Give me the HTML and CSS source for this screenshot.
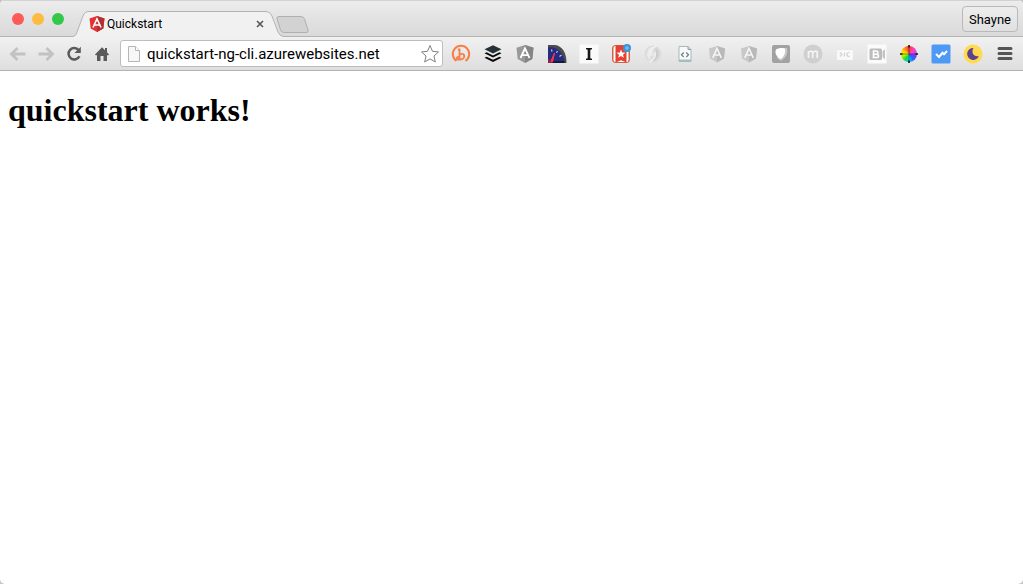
FILE: index.html
```html
<!DOCTYPE html>
<html lang="en">
<head>
  <meta charset="UTF-8">
  <meta name="viewport" content="width=device-width, initial-scale=1.0">
  <title>Quickstart</title>
  <link rel="stylesheet" href="styles.css">
</head>
<body>
  <div class="window">

    <!-- Tab strip -->
    <header class="tab-strip">
      <div class="lights">
        <button class="light close" aria-label="Close window"></button>
        <button class="light minimize" aria-label="Minimize window"></button>
        <button class="light maximize" aria-label="Maximize window"></button>
      </div>
      <div class="tab">
        <svg class="tab-shape" viewBox="0 0 212 26" preserveAspectRatio="none" aria-hidden="true">
          <path d="M0 25.5 C3 25.5 4 24 5 21 L11 5 Q12.500 .5 17 .5 H193 Q198 .5 200 5 L206 21 Q208 25.500 212 25.500 V26 H0Z" fill="#f1f1f1"/>
          <path d="M0 25.500 C3 25.500 4 24 5 21 L11 5 Q12.500 .5 17 .5 H193 Q198 .5 200 5 L206 21 Q208 25.500 212 25.500" fill="none" stroke="#b3b3b3"/>
        </svg>
        <svg class="favicon" viewBox="0 0 16 16" aria-hidden="true">
          <path d="M8 0 L15.500 2.600 L14.300 12.400 L8 16 L1.700 12.400 L.5 2.600Z" fill="#e23237"/>
          <path d="M8 0 L15.500 2.600 L14.300 12.400 L8 16Z" fill="#b52e31"/>
          <path d="M4 11.500 L8 2.800 L12 11.500 M5.500 9 H10.500" fill="none" stroke="#fff" stroke-width="1.600"/>
        </svg>
        <span class="tab-title">Quickstart</span>
        <button class="tab-close" aria-label="Close tab">
          <svg viewBox="0 0 8 8"><path d="M1 1 L7 7 M7 1 L1 7" stroke="#555" stroke-width="1.600"/></svg>
        </button>
      </div>
      <button class="new-tab" aria-label="New tab">
        <svg viewBox="0 0 33 18"><path d="M3 .5 H25 Q27.500 .5 28.500 3 L32 14 Q33 16.500 30 16.500 H8 Q5.500 16.500 4.500 14 L1 3 Q0 .5 3 .5Z" fill="#d2d2d2" stroke="#b0b0b0"/></svg>
      </button>
      <button class="profile">Shayne</button>
    </header>

    <!-- Toolbar -->
    <nav class="toolbar">
      <div class="nav-buttons">
        <button class="nav-button" aria-label="Back">
          <svg viewBox="0 0 18 18"><path d="M8.500 3 L2.500 9 L8.500 15 M3 9 H16.500" fill="none" stroke="#c2c2c2" stroke-width="2.800"/></svg>
        </button>
        <button class="nav-button" aria-label="Forward">
          <svg viewBox="0 0 18 18"><path d="M9.500 3 L15.500 9 L9.500 15 M15 9 H1.500" fill="none" stroke="#c2c2c2" stroke-width="2.800"/></svg>
        </button>
        <button class="nav-button" aria-label="Reload">
          <svg viewBox="0 0 18 18"><path d="M13.700 5.200 A5.700 5.700 0 1 0 14.400 11.300" fill="none" stroke="#5a5a5a" stroke-width="2.500"/><path d="M15.800 1.800 V8 H9.500Z" fill="#5a5a5a"/></svg>
        </button>
        <button class="nav-button" aria-label="Home">
          <svg viewBox="0 0 18 18"><path d="M9 2.300 L12 5.200 V3 H14 V7.200 L16 9.500 L15.300 10.200 H14 V16 H10.500 V11 H7.500 V16 H4 V10.200 H2.700 L2 9.500Z" fill="#5a5a5a"/></svg>
        </button>
      </div>

      <div class="omnibox">
        <svg class="page-icon" viewBox="0 0 12 16" aria-hidden="true"><path d="M.5 .5 H7.500 L11.500 4.500 V15.500 H.5Z" fill="#f7f7f7" stroke="#b5b5b5"/><path d="M7.500 .5 V4.500 H11.500" fill="#fff" stroke="#b5b5b5"/></svg>
        <input class="url" type="text" aria-label="Address" value="quickstart-ng-cli.azurewebsites.net">
        <button class="star" aria-label="Bookmark this page">
          <svg viewBox="0 0 20 20"><path d="M10 1.500 L12.500 7.300 L18.500 7.900 L14 12 L15.300 18 L10 14.900 L4.700 18 L6 12 L1.500 7.900 L7.500 7.300Z" fill="#fff" stroke="#808080"/></svg>
        </button>
      </div>

      <div class="extensions">
        <button class="ext" aria-label="Bitly">
          <svg viewBox="0 0 20 20"><path d="M5.500 16.800 A8.200 8.200 0 1 1 14.500 16.800" fill="none" stroke="#f97d42" stroke-width="2"/><path d="M6.800 5.500 H8.500 V15.500 M8.500 11 Q10 9.300 12 10 Q13.800 11 13 13.500 Q12 15.700 8.500 15.500 H7 Q5.500 15.500 5.800 13.800 Q6.200 12.700 8.500 12.700" fill="none" stroke="#f97d42" stroke-width="1.800"/></svg>
        </button>
        <button class="ext" aria-label="Buffer">
          <svg viewBox="0 0 20 20"><path d="M10 1.200 L18.500 5.300 L10 9.400 L1.500 5.300Z" fill="#263238"/><path d="M1.500 9.300 L3.600 8.300 L10 11.400 L16.400 8.300 L18.500 9.300 L10 13.500Z M1.500 13.700 L3.600 12.700 L10 15.800 L16.400 12.700 L18.500 13.700 L10 18Z" fill="#080808"/></svg>
        </button>
        <button class="ext" aria-label="Angular Batarang">
          <svg viewBox="0 0 20 20"><path d="M10 1 L18.500 3.800 L17.300 15 L10 19 L2.700 15 L1.500 3.800Z" fill="#999"/><path d="M10 1 L18.500 3.800 L17.300 15 L10 19Z" fill="#858585"/><path d="M5.500 14 L10 4.300 L14.500 14 M7.300 11.200 H12.700" fill="none" stroke="#fff" stroke-width="1.800"/></svg>
        </button>
        <button class="ext" aria-label="Speed">
          <svg viewBox="0 0 20 20"><path d="M1 1 H8 C15 2 19.500 8 19.500 19 H1Z" fill="#4b4b4b"/><path d="M1 3.500 C10 2 17 9 17.500 19 H1Z" fill="#252c80"/><path d="M1 17 H17.500 V19 H1Z" fill="#17193d"/><path d="M4.500 5.500 L5 7.500 M10.500 7 L9.500 8.700 M14.500 11 L12.500 12.500" stroke="#c3c8ec" stroke-width="1.200"/><path d="M3.500 18 L7.500 9 L5.500 18Z" fill="#ff354d" stroke="#ff354d"/><path d="M1 15 L4 16 L4 19 H1Z" fill="#8c2250"/></svg>
        </button>
        <button class="ext" aria-label="Instapaper">
          <svg viewBox="0 0 20 20"><path d="M.5 .5 H19.500 V19.500 H.5Z" fill="#fafafa"/><path d="M7 4 H13 V5.300 L11.300 5.800 V14.200 L13 14.700 V16 H7 V14.700 L8.700 14.200 V5.800 L7 5.300Z" fill="#171717"/></svg>
        </button>
        <button class="ext" aria-label="Wunderlist">
          <svg viewBox="0 0 20 20"><rect x="1" y="1" width="18" height="18" rx="4" fill="#c8664c"/><rect x="2.500" y="2" width="15" height="16" rx="2" fill="#fff"/><path d="M4.500 1.500 H15.500 V18.500 L10 16.300 L4.500 18.500Z" fill="#e8402f"/><path d="M10 5.500 L11.200 8.500 L14.400 8.700 L12 10.700 L12.800 13.800 L10 12.100 L7.200 13.800 L8 10.700 L5.600 8.700 L8.800 8.500Z" fill="#fff"/><circle cx="16" cy="4" r="4" fill="#3796dc"/><path d="M14 4 H18 M16 2 V6" stroke="#86c8f4"/></svg>
        </button>
        <button class="ext" aria-label="Swirl">
          <svg viewBox="0 0 20 20"><circle cx="10" cy="10" r="8.500" fill="#dcdcdc"/><path d="M12 2.500 A7.500 7.500 0 0 0 8 16.500 C6 11 7 6 12 2.500Z" fill="#ececec"/><path d="M8 17.500 A7.500 7.500 0 0 0 12 3.500 C14 9 13 14 8 17.500Z" fill="#cccccc"/><path d="M13.500 1.800 C8 5 7 8 7.500 11.500 M6.500 18.200 C12 15 13 12 12.500 8.500" fill="none" stroke="#f4f4f4" stroke-width="1.200"/><circle cx="10" cy="10" r="2.500" fill="#e6e6e6"/></svg>
        </button>
        <button class="ext" aria-label="View source">
          <svg viewBox="0 0 20 20"><path d="M4 2.500 H13 L16 5.500 V17.500 H4Z" fill="#f7fafa" stroke="#a9b8b8"/><path d="M13 2.500 V5.500 H16" fill="#bdd3d3" stroke="#8fa4a4"/><path d="M4 16.500 H16" stroke="#9dc2c0" stroke-width="2"/><path d="M8.700 8.500 L6.500 10.800 L8.700 13 M11.300 8.500 L13.500 10.800 L11.300 13" fill="none" stroke="#777" stroke-width="1.200"/></svg>
        </button>
        <button class="ext" aria-label="Angular">
          <svg viewBox="0 0 20 20"><path d="M10 2 L18 4.600 L16.900 14.500 L10 18.500 L3.100 14.500 L2 4.600Z" fill="#c8c8c8"/><path d="M10 2 L18 4.600 L16.900 14.500 L10 18.500Z" fill="#b9b9b9"/><path d="M5.700 13.800 L10 4.500 L14.300 13.800 M7.300 11 H12.700" fill="none" stroke="#f5f5f5" stroke-width="1.600"/></svg>
        </button>
        <button class="ext" aria-label="Angular inspector">
          <svg viewBox="0 0 20 20"><path d="M10 2 L18 4.600 L16.900 14.500 L10 18.500 L3.100 14.500 L2 4.600Z" fill="#c8c8c8"/><path d="M10 2 L18 4.600 L16.900 14.500 L10 18.500Z" fill="#b9b9b9"/><path d="M5.700 13.800 L10 4.500 L14.300 13.800 M7.300 11 H12.700" fill="none" stroke="#f5f5f5" stroke-width="1.600"/></svg>
        </button>
        <button class="ext" aria-label="Ember">
          <svg viewBox="0 0 20 20"><rect x="1" y="1" width="18" height="18" rx="2" fill="#a2a2a2"/><path d="M12 4 H16 Q18 12 10 17 L6 14Z" fill="#c9c9c9"/><path d="M5 5.500 C8 3.500 13 3.500 14 5 C14.500 9 13 13 9.500 15 C5.500 13 3.500 9 5 5.500Z" fill="#fff"/></svg>
        </button>
        <button class="ext" aria-label="Momentum">
          <svg viewBox="0 0 20 20"><circle cx="10" cy="10" r="9.500" fill="#cfcfcf"/><path d="M5.500 14 V7 M5.500 9 Q7.500 6 9.700 8 V14 M9.700 9 Q12 6 14.200 8 V14" fill="none" stroke="#f4f4f4" stroke-width="1.700"/></svg>
        </button>
        <button class="ext" aria-label="Card">
          <svg viewBox="0 0 20 20"><path d="M2 4 H18 V16 H2Z" fill="#f8f8f8"/><path d="M2 4 H18 V6 H2Z" fill="#e9e9e9"/><path d="M5 8.500 L7 10.500 L5 12.500 M9.500 8.500 V12.500 M14.500 8.500 Q12 8.500 12 10.500 Q12 12.500 14.500 12.500" fill="none" stroke="#d2d2d2" stroke-width="1.200"/></svg>
        </button>
        <button class="ext" aria-label="BrowserStack">
          <svg viewBox="0 0 20 20"><path d="M.5 .5 H19.500 V19.500 H.5Z" fill="#fbfbfb"/><rect x="2.500" y="4.500" width="12.500" height="11.500" rx="1.500" fill="#bcbcbc"/><path d="M15.500 7.500 L18 5 V15.500 L15.500 13Z" fill="#c4c4c4"/><path d="M6.500 7 V13.500 H9.500 Q11.700 13.500 11.500 12 Q11.500 10.200 9.500 10.200 H6.500 H9.500 Q11 10.200 11 8.700 Q11 7 9.500 7Z" fill="none" stroke="#fff" stroke-width="1.600"/></svg>
        </button>
        <button class="ext color-wheel" aria-label="Color picker">
          <span class="wheel"></span>
          <svg class="wheel-marks" viewBox="0 0 20 20"><path d="M10 1 V3.500 M10 16.500 V19 M1 10 H3.500 M16.500 10 H19" stroke="#111" stroke-width="1.600"/><path d="M10 3 V17 M3 10 H17" stroke="#222" stroke-width=".5"/></svg>
        </button>
        <button class="ext" aria-label="Tasks">
          <svg viewBox="0 0 20 20"><rect x=".5" y=".5" width="19" height="19" rx="1.500" fill="#4d99f5"/><path d="M5 10 L8 13 L11.500 8.800 L13 10.300 L16 7" fill="none" stroke="#fff" stroke-width="2"/></svg>
        </button>
        <button class="ext" aria-label="Night mode">
          <svg viewBox="0 0 20 20"><circle cx="10" cy="10" r="9.500" fill="#ffda4f"/><path d="M10.500 4 A6 6 0 1 0 15.800 12 C11.500 13.500 7.500 9 10.500 4Z" fill="#5a438f"/></svg>
        </button>
        <button class="ext" aria-label="Menu">
          <svg viewBox="0 0 20 20"><path d="M4 4.500 H16 M4 9.500 H16 M4 14.500 H16" stroke="#555" stroke-width="3" stroke-linecap="round"/></svg>
        </button>
      </div>
    </nav>

    <main class="page">
      <h1>quickstart works!</h1>
    </main>
  </div>
</body>
</html>
```

FILE: styles.css
```css
* {
  box-sizing: border-box;
}

body {
  margin: 0;
  background: #c4c4c4;
  font-family: Roboto, "Liberation Sans", Arial, sans-serif;
  color: #000;
}

button {
  margin: 0;
  padding: 0;
  border: none;
  background: none;
  font-family: inherit;
  color: inherit;
}

svg {
  display: block;
}

.window {
  display: flex;
  flex-direction: column;
  min-height: 100vh;
  border-radius: 5px;
  overflow: hidden;
  background: #fff;
}

/* Tab strip */
.tab-strip {
  display: flex;
  align-items: flex-end;
  height: 37px;
  padding: 0 5px 0 12px;
  background: linear-gradient(#ececec, #d9d9d9);
  border-top: 1px solid #d2d2d2;
  box-shadow: inset 0 -1px #b3b3b3;
}

.lights {
  display: flex;
  gap: 8px;
  margin-bottom: 12px;
}

.light {
  width: 12px;
  height: 12px;
  border-radius: 50%;
}

.close {
  background: #fc5b57;
}

.minimize {
  background: #fdbc40;
}

.maximize {
  background: #34c84a;
}

.tab {
  position: relative;
  display: flex;
  align-items: center;
  width: 212px;
  height: 26px;
  margin-left: 8px;
  padding: 0 20px 0 17px;
}

.tab-shape {
  position: absolute;
  inset: 0;
  width: 100%;
  height: 100%;
}

.favicon {
  position: relative;
  width: 16px;
  height: 16px;
}

.tab-title {
  position: relative;
  flex: 1;
  margin-left: 2px;
  font-size: 12px;
  line-height: 16px;
}

.tab-close {
  position: relative;
  width: 8px;
  height: 8px;
}

.new-tab {
  width: 33px;
  height: 18px;
  margin: 0 0 3px -8px;
  z-index: 1;
}

.profile {
  align-self: center;
  height: 26px;
  margin-left: auto;
  padding: 0 6px;
  border: 1px solid #b9b9b9;
  border-radius: 4px;
  background: linear-gradient(#ededed, #e0e0e0);
  font-size: 13px;
}

/* Toolbar */
.toolbar {
  display: flex;
  align-items: center;
  height: 34px;
  padding: 0 8px 0 9px;
  background: linear-gradient(#f1f1f1, #dedede);
  border-bottom: 1px solid #b3b3b3;
}

.nav-buttons {
  display: flex;
  gap: 10px;
}

.nav-button,
.nav-button svg {
  width: 18px;
  height: 18px;
}

.omnibox {
  display: flex;
  flex: 1;
  align-items: center;
  min-width: 0;
  height: 27px;
  margin: 0 8px 0 9px;
  padding: 0 2px 0 7px;
  border: 1px solid #bdbdbd;
  border-radius: 3px;
  background: #fff;
}

.page-icon {
  width: 12px;
  height: 16px;
}

.url {
  flex: 1;
  min-width: 0;
  margin: 0 0 0 7px;
  padding: 0;
  border: none;
  outline: none;
  background: none;
  font-family: inherit;
  font-size: 15px;
  color: #000;
}

.star,
.star svg {
  width: 20px;
  height: 20px;
}

.extensions {
  display: flex;
  gap: 12px;
}

.ext,
.ext svg {
  width: 20px;
  height: 20px;
}

.color-wheel {
  position: relative;
}

.wheel {
  display: block;
  width: 16px;
  height: 16px;
  margin: 2px;
  border-radius: 50%;
  background: conic-gradient(#ff3a2a, #ff3f9c, #f03cf0, #6a3cff, #1b6bff, #00d5f0, #14dc3c, #b8f000, #ffe600, #ff8a1c, #ff3a2a);
}

.wheel-marks {
  position: absolute;
  inset: 0;
}

/* Page */
.page {
  flex: 1;
  padding: 0 8px;
  font-family: "Liberation Serif", "Times New Roman", serif;
}

.page h1 {
  margin: 21px 0;
  font-size: 32px;
  line-height: 37px;
}
```
